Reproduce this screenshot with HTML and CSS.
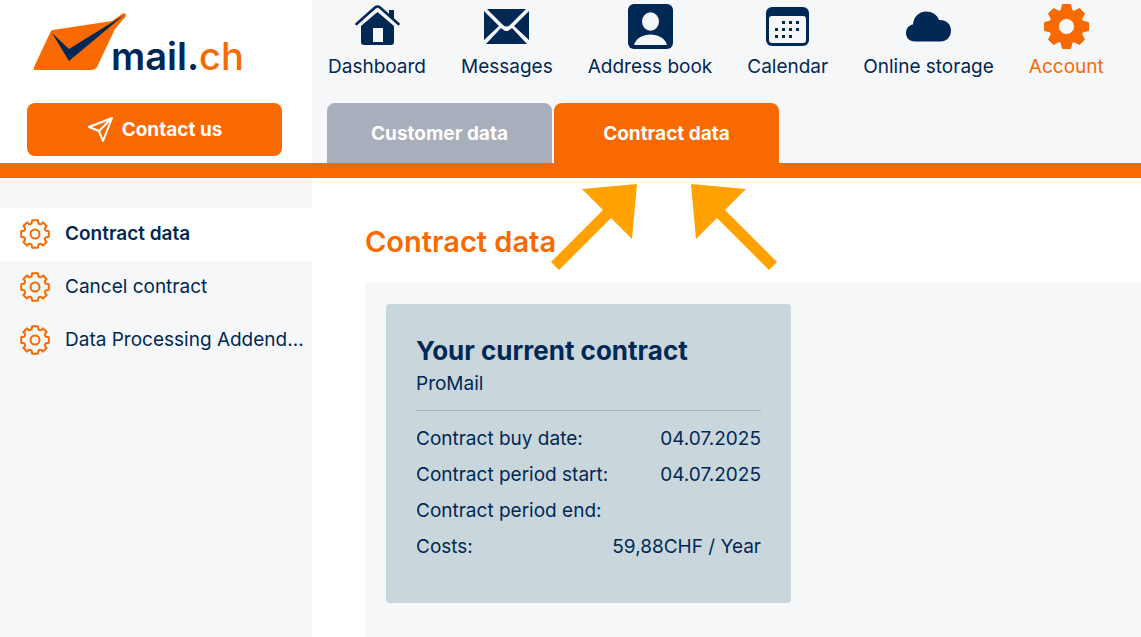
FILE: index.html
```html
<!DOCTYPE html>
<html lang="en">
<head>
    <meta charset="UTF-8">
    <meta name="viewport" content="width=device-width, initial-scale=1.0">
    <title>mail.ch - Contract data</title>
    <link rel="stylesheet" href="styles.css">
</head>
<body>
    <!-- Shared gear shape for the sidebar -->
    <svg class="defs" aria-hidden="true">
        <symbol id="gear" viewBox="-15 -15 30 30">
            <path d="M-3.500-10.500L-2.800-13.800H2.800L3.500-10.500Q5-9.300 6.500-10.200L8-11.600L11.600-8L10.200-6.500Q9.300-5 10.500-3.500L13.800-2.800V2.800L10.500 3.500Q9.300 5 10.200 6.500L11.600 8L8 11.600L6.500 10.200Q5 9.300 3.500 10.500L2.800 13.800H-2.800L-3.500 10.500Q-5 9.300-6.500 10.200L-8 11.600L-11.600 8L-10.200 6.500Q-9.300 5-10.500 3.500L-13.800 2.800V-2.800L-10.500-3.500Q-9.300-5-10.200-6.500L-11.600-8L-8-11.600L-6.500-10.200Q-5-9.300-3.500-10.500Z"/>
            <circle r="4.500"/>
        </symbol>
    </svg>

    <header class="header">
        <div class="brand">
            <a class="logo" href="#" aria-label="mail.ch">
                <svg width="256" height="103" viewBox="0 0 256 103">
                    <path d="M53 30L112 21L122 14Q126 12 126 16L115 29L97 67Q95 70 92 70H35Q33 70 34 67L50 33Q51 30 53 30Z" fill="#f86a00"/>
                    <path d="M52 33L69 49L124 15L69 61Z" fill="#002855"/>
                    <text class="logo-text" x="111" y="70">mail.<tspan class="logo-tld">ch</tspan></text>
                </svg>
            </a>
            <button type="button" class="contact-button">
                <svg width="27" height="27" viewBox="0 0 27 27" fill="none" stroke="#fff" stroke-width="2" stroke-linejoin="round">
                    <path d="M25 2L2 11L12 15L16 25ZM12 15L25 2"/>
                </svg>
                Contact us
            </button>
        </div>

        <div class="header-main">
            <nav class="main-nav">
                <a href="#">
                    <svg width="45" height="45" viewBox="0 0 45 45">
                        <path d="M1.500 20L20 3.500Q22.500 1.500 25 3.500L43.500 20" fill="none" stroke="#002855" stroke-width="2.600" stroke-linecap="round"/>
                        <path d="M34 6H39V17L34 12.500Z"/>
                        <path fill-rule="evenodd" d="M22.500 8L39 22V38Q39 41 36 41H9Q6 41 6 38V22ZM18 24V38H28V24Z"/>
                    </svg>
                    Dashboard
                </a>
                <a href="#">
                    <svg width="45" height="45" viewBox="0 0 45 45">
                        <path d="M3 5H42L26 21Q22.500 24 19 21ZM0 7L15 22L0 36ZM45 7V36L30 22ZM17 24L19 25.500Q22.500 28.500 26 25.500L28 24L43 40H2Z"/>
                    </svg>
                    Messages
                </a>
                <a href="#">
                    <svg width="45" height="45" viewBox="0 0 45 45">
                        <rect width="45" height="45" rx="6"/>
                        <ellipse cx="22.500" cy="17.500" rx="8.500" ry="9.300" fill="#f6f7f9"/>
                        <path d="M6 41C8 34 15 30.500 22.500 30.500S37 34 39 41Z" fill="#f6f7f9"/>
                    </svg>
                    Address book
                </a>
                <a href="#">
                    <svg width="45" height="45" viewBox="0 0 45 45">
                        <rect x="1" y="3" width="43" height="39" rx="6"/>
                        <rect x="4" y="12" width="37" height="27" rx="3" fill="#f6f7f9"/>
                        <path d="M17 17h3v3h-3zM24 17h3v3h-3zM31 17h3v3h-3zM10 24h3v3h-3zM17 24h3v3h-3zM24 24h3v3h-3zM31 24h3v3h-3zM10 31h3v3h-3zM17 31h3v3h-3zM24 31h3v3h-3z"/>
                    </svg>
                    Calendar
                </a>
                <a href="#">
                    <svg width="45" height="45" viewBox="0 0 45 45">
                        <path d="M9 37.500C3 37.500 0 33.500 0 29C0 24.500 3 21 7 20.500C7.500 13 13 7.500 20 7.500C26 7.500 31 10.500 33 16C40 15.500 45 20 45 26.500C45 33 40.500 37.500 34.500 37.500Z"/>
                    </svg>
                    Online storage
                </a>
                <a href="#" class="current">
                    <svg class="gear-solid" width="45" height="45" viewBox="-22.500 -22.500 45 45">
                        <path fill-rule="evenodd" d="M-5.500-16L-4-22H4L5.500-16L7.500-15.200L13-18L18-13L15.200-7.500L16-5.500L22-4V4L16 5.500L15.200 7.500L18 13L13 18L7.500 15.200L5.500 16L4 22H-4L-5.500 16L-7.500 15.200L-13 18L-18 13L-15.200 7.500L-16 5.500L-22 4V-4L-16-5.500L-15.200-7.500L-18-13L-13-18L-7.500-15.200ZM-8 0A8 8 0 1 0 8 0A8 8 0 1 0-8 0Z"/>
                    </svg>
                    Account
                </a>
            </nav>
            <div class="tabs">
                <a href="#" class="tab">Customer data</a>
                <a href="#" class="tab active">Contract data</a>
            </div>
        </div>
    </header>

    <div class="page">
        <aside class="sidebar">
            <a href="#" class="side-link active">
                <svg class="gear-outline" width="30" height="30"><use href="#gear"/></svg>
                <span>Contract data</span>
            </a>
            <a href="#" class="side-link">
                <svg class="gear-outline" width="30" height="30"><use href="#gear"/></svg>
                <span>Cancel contract</span>
            </a>
            <a href="#" class="side-link" title="Data Processing Addendum">
                <svg class="gear-outline" width="30" height="30"><use href="#gear"/></svg>
                <span>Data Processing Addend…</span>
            </a>
        </aside>

        <main class="content">
            <h1>Contract data</h1>
            <!-- Arrows pointing at the open tab -->
            <svg class="arrows" width="226" height="86" viewBox="0 0 226 86" aria-hidden="true">
                <path d="M86 0L31 5L52 26L0 78L8 86L60 34L81 55Z"/>
                <path d="M140 0L195 5L174 26L226 78L218 86L166 34L145 55Z"/>
            </svg>
            <div class="panel">
                <section class="card">
                    <h2>Your current contract</h2>
                    <p class="product">ProMail</p>
                    <table>
                        <tr><th scope="row">Contract buy date:</th><td>04.07.2025</td></tr>
                        <tr><th scope="row">Contract period start:</th><td>04.07.2025</td></tr>
                        <tr><th scope="row">Contract period end:</th><td></td></tr>
                        <tr><th scope="row">Costs:</th><td>59,88CHF / Year</td></tr>
                    </table>
                </section>
            </div>
        </main>
    </div>
</body>
</html>
```
FILE: styles.css
```css
* {
    box-sizing: border-box;
}
body {
    margin: 0;
    min-height: 100vh;
    display: flex;
    flex-direction: column;
    font-family: Inter, sans-serif;
    font-size: 19px;
    line-height: 24px;
    color: #002855;
    background-color: #fff;
}
a {
    color: inherit;
    text-decoration: none;
}
svg {
    display: block;
    flex-shrink: 0;
}
.defs {
    position: absolute;
    width: 0;
    height: 0;
}

/* Header */
.header {
    display: flex;
    border-bottom: 15px solid #f86a00;
}
.brand {
    width: 312px;
    flex-shrink: 0;
    padding: 0 30px 7px 27px;
}
.logo svg {
    margin-left: -27px;
}
.logo-text {
    font-size: 38px;
    font-weight: 600;
    fill: #002855;
}
.logo-tld {
    font-weight: 500;
    fill: #f86a00;
}
.contact-button {
    display: flex;
    align-items: center;
    justify-content: center;
    gap: 8px;
    width: 100%;
    height: 53px;
    border: none;
    border-radius: 8px;
    background-color: #f86a00;
    color: #fff;
    font: inherit;
    font-weight: 700;
    cursor: pointer;
}
.header-main {
    flex: 1;
    display: flex;
    flex-direction: column;
    justify-content: space-between;
    background-color: #f6f7f9;
}
.main-nav {
    display: flex;
    gap: 35px;
    padding: 4px 16px 0;
    white-space: nowrap;
}
.main-nav a {
    display: flex;
    flex-direction: column;
    align-items: center;
    gap: 6px;
}
.main-nav svg {
    fill: #002855;
}
.main-nav .current {
    color: #f86a00;
}
.main-nav .gear-solid {
    fill: #f86a00;
    stroke: #f86a00;
    stroke-linejoin: round;
}
.tabs {
    display: flex;
    gap: 2px;
    padding-left: 15px;
}
.tab {
    width: 225px;
    height: 60px;
    line-height: 62px;
    text-align: center;
    font-weight: 700;
    color: #fff;
    background-color: #a6afbb;
    border-radius: 8px 8px 0 0;
}
.tab.active {
    background-color: #f86a00;
}

/* Sidebar */
.page {
    flex: 1;
    display: flex;
}
.sidebar {
    width: 312px;
    flex-shrink: 0;
    padding-top: 30px;
    background-color: #f6f7f9;
}
.side-link {
    display: flex;
    align-items: center;
    gap: 15px;
    height: 53px;
    padding: 0 8px 1px 20px;
}
.side-link span {
    overflow: hidden;
    text-overflow: ellipsis;
    white-space: nowrap;
}
.side-link.active {
    background-color: #fff;
    font-weight: 600;
}
.gear-outline {
    fill: none;
    stroke: #f86a00;
    stroke-width: 2;
    stroke-linejoin: round;
}

/* Content */
.content {
    position: relative;
    flex: 1;
    display: flex;
    flex-direction: column;
    padding: 46px 0 0 53px;
}
h1 {
    margin: 0 0 23px;
    font-size: 29px;
    line-height: 36px;
    font-weight: 600;
    color: #f86a00;
}
.arrows {
    position: absolute;
    top: 6px;
    left: 239px;
    fill: #ffa200;
}
.panel {
    flex: 1;
    padding: 21px;
    background-color: #f6f7f9;
}
.card {
    max-width: 405px;
    padding: 30px 30px 38px;
    background-color: #c9d7dd;
    border-radius: 4px;
}
h2 {
    margin: 0;
    font-size: 26px;
    line-height: 34px;
    font-weight: 700;
}
.product {
    margin: 0 0 10px;
    padding-bottom: 10px;
    line-height: 32px;
    border-bottom: 1px solid #a0b2be;
}
table {
    width: 100%;
    border-collapse: collapse;
}
th, td {
    height: 36px;
    padding: 0;
    text-align: left;
    font-weight: 400;
}
td {
    text-align: right;
}
```
